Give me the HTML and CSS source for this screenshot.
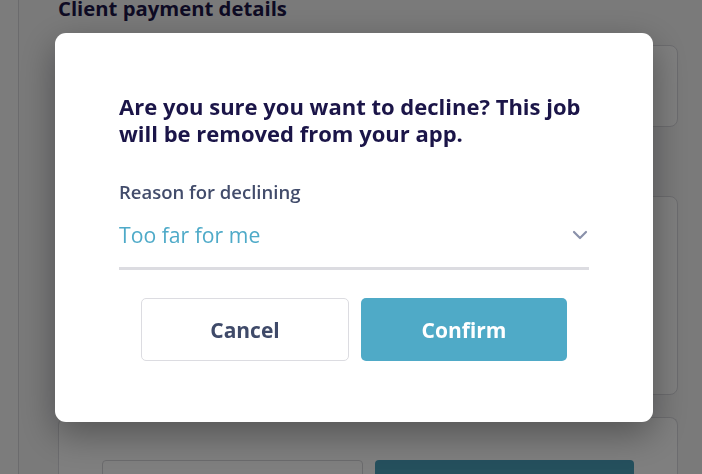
FILE: index.html
```html
<!DOCTYPE html>
<html lang="en">
<head>
<meta charset="utf-8">
<title>Decline job</title>
<link rel="stylesheet" href="styles.css">
</head>
<body>
<div class="page">
  <aside class="sidebar"></aside>
  <main class="main">
    <h2 class="page-title">Client payment details</h2>
    <section class="card card-top"></section>
    <section class="card card-mid"></section>
    <section class="card card-bottom">
      <div class="bg-actions">
        <span class="bg-btn bg-btn-outline"></span>
        <span class="bg-btn bg-btn-solid"></span>
      </div>
    </section>
  </main>
</div>

<div class="overlay">
  <div class="modal" role="dialog" aria-modal="true">
    <p class="modal-title">Are you sure you want to decline? This job will be removed from your app.</p>
    <label class="field-label">Reason for declining</label>
    <div class="select">
      <span class="select-value">Too far for me</span>
      <svg class="chevron" width="16" height="10" viewBox="0 0 16 10" aria-hidden="true">
        <path d="M2 2 L8 8 L14 2" fill="none" stroke="#8a91aa" stroke-width="2.2" stroke-linecap="round" stroke-linejoin="round"/>
      </svg>
    </div>
    <div class="actions">
      <button class="btn btn-cancel">Cancel</button>
      <button class="btn btn-confirm">Confirm</button>
    </div>
  </div>
</div>
</body>
</html>
```

FILE: styles.css
```css
* { box-sizing: border-box; }

html, body {
  margin: 0;
  padding: 0;
  width: 702px;
  height: 474px;
  overflow: hidden;
  background: #f4f4f5;
  font-family: "Open Sans", Lato, sans-serif;
}

.page {
  display: flex;
  height: 474px;
  overflow: hidden;
}

.sidebar {
  width: 19px;
  flex: none;
  border-right: 1px solid #d6d6da;
  background: #f8f8f9;
}

.main {
  flex: 1;
  padding: 0 24px 0 39px;
  display: flex;
  flex-direction: column;
}

.page-title {
  margin: -2px 0 0 0;
  font-size: 20.3px;
  line-height: 20px;
  font-weight: 700;
  color: #1c1648;
}

.card {
  background: #ffffff;
  border: 1px solid #d9d9de;
  border-radius: 8px;
  flex: none;
}

.card-top { margin-top: 27px; height: 82px; }
.card-mid { margin-top: 69px; height: 199px; }
.card-bottom { margin-top: 22px; height: 80px; border-bottom: none; border-radius: 8px 8px 0 0; }

.bg-actions {
  display: flex;
  gap: 12px;
  padding: 42px 43px 0 43px;
}

.bg-btn {
  height: 40px;
  flex: 1;
  border-radius: 4px;
}
.bg-btn-outline { border: 1px solid #d6d6da; background: #fff; }
.bg-btn-solid { background: #4aa0bb; }

.overlay {
  position: fixed;
  inset: 0;
  background: rgba(0, 0, 0, 0.5);
}

.modal {
  position: absolute;
  left: 55px;
  top: 33px;
  width: 598px;
  height: 389px;
  background: #ffffff;
  border-radius: 11px;
  box-shadow: 0 12px 36px rgba(0, 0, 0, 0.35);
  padding: 60px 64px 0 64px;
  display: flex;
  flex-direction: column;
}

.modal-title {
  margin: 0;
  font-size: 22px;
  line-height: 27px;
  font-weight: 700;
  color: #1b1548;
}

.field-label {
  margin-top: 34px;
  font-size: 18.5px;
  line-height: 22px;
  font-weight: 600;
  color: #424c6b;
}

.select {
  margin-top: 20px;
  display: flex;
  align-items: center;
  justify-content: space-between;
  padding: 0 0 20px 0;
  border-bottom: 3px solid #dcdce1;
}

.select-value {
  font-size: 21.2px;
  line-height: 24px;
  color: #4eaac8;
}

.chevron {
  margin-right: 1px;
}

.actions {
  display: flex;
  gap: 12px;
  padding: 0 22px;
  margin-top: 28px;
}

.btn {
  flex: 1;
  height: 63px;
  border-radius: 5px;
  font-family: "Open Sans", Lato, sans-serif;
  font-size: 21px;
  font-weight: 700;
  cursor: pointer;
}

.btn-cancel {
  background: #ffffff;
  border: 1px solid #dcdce1;
  color: #3f4a69;
}

.btn-confirm {
  background: #4faac7;
  border: none;
  color: #ffffff;
}
```
